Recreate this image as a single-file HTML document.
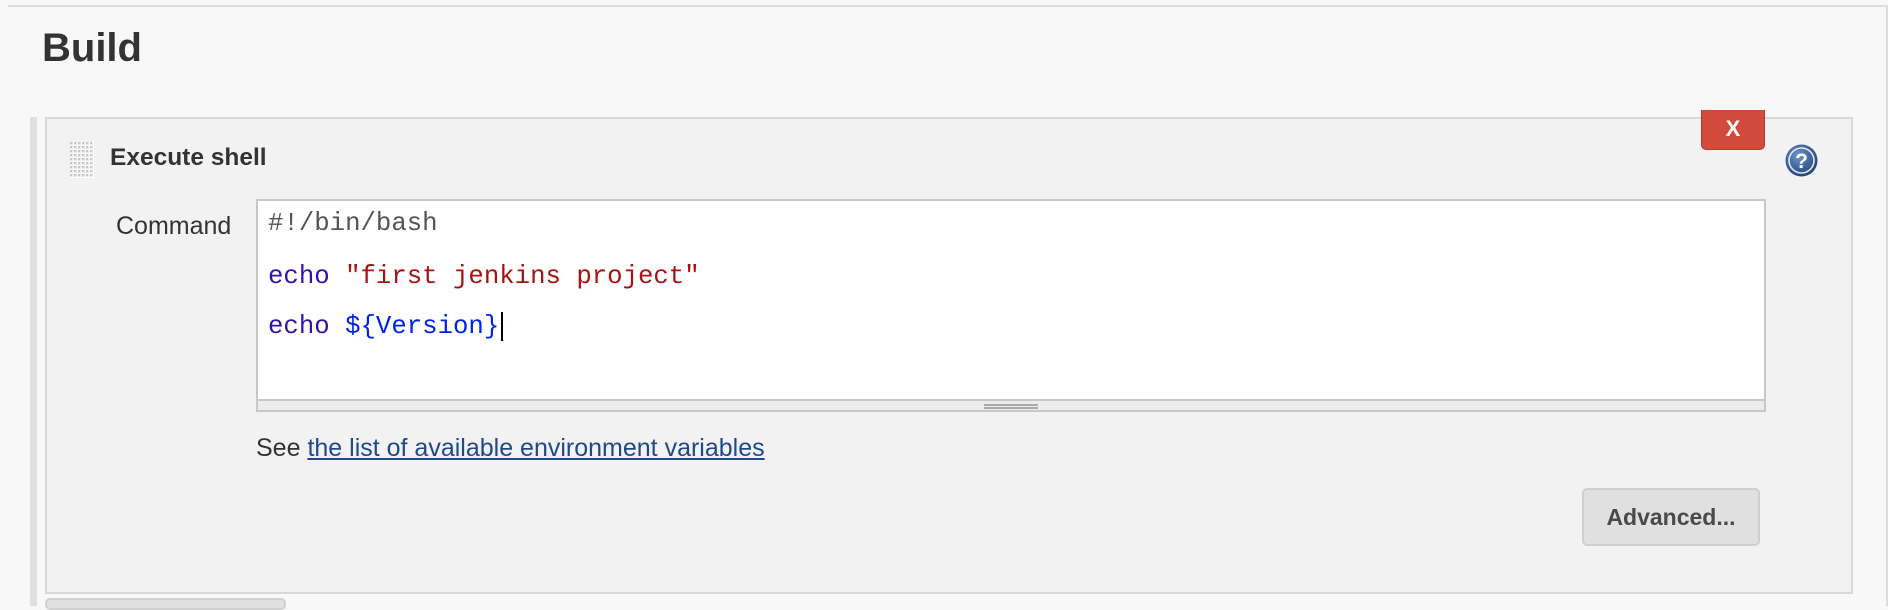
<!DOCTYPE html>
<html><head><meta charset="utf-8"><style>
*{margin:0;padding:0;box-sizing:border-box}
body{width:1888px;height:606px;background:#f8f8f8;position:relative;overflow:hidden;font-family:"Liberation Sans",Arial,sans-serif;color:#333}
.a{position:absolute}
.mono{font-family:"Liberation Mono",monospace;font-size:25.7px;white-space:pre}
</style></head><body>
<div class="a" style="left:8px;top:5px;width:1880px;height:2px;background:#ddd"></div>
<div class="a" style="left:1886px;top:5px;width:2px;height:601px;background:#ddd"></div>
<div class="a" style="left:42px;top:23px;font-size:40px;font-weight:bold;line-height:50px;color:#333">Build</div>
<div class="a" style="left:30px;top:117px;width:7px;height:489px;background:#e0e0e0"></div>
<div class="a" style="left:45px;top:117px;width:1808px;height:477px;background:#f2f2f2;border:2px solid #d8d8d8"></div>
<svg class="a" style="left:70px;top:142px" width="24" height="36">
<defs><pattern id="p" width="4" height="4" patternUnits="userSpaceOnUse"><rect width="2.5" height="2.5" fill="#c8c8c8"/></pattern></defs>
<rect width="24" height="36" fill="#fff"/><rect width="24" height="36" fill="url(#p)"/></svg>
<div class="a" style="left:110px;top:144px;font-size:24.5px;font-weight:bold;line-height:28px">Execute shell</div>
<div class="a" style="left:1701px;top:110px;width:64px;height:40px;background:#d24a3c;border:1px solid #b93a2e;border-top:none;border-radius:0 0 5px 5px;color:#fff;font-weight:bold;font-size:22px;text-align:center;line-height:38px">X</div>
<svg class="a" style="left:1785px;top:144px" width="33" height="33" viewBox="0 0 33 33">
<defs><radialGradient id="g" cx="40%" cy="35%" r="70%"><stop offset="0" stop-color="#6f95c8"/><stop offset="1" stop-color="#1d3f78"/></radialGradient></defs>
<circle cx="16.5" cy="16.5" r="16" fill="url(#g)"/><circle cx="16.5" cy="16.5" r="12.5" fill="none" stroke="#dfe8f4" stroke-width="1.6"/>
<text x="16.5" y="24" text-anchor="middle" font-family="Liberation Sans" font-weight="bold" font-size="21" fill="#fff">?</text></svg>
<div class="a" style="left:116px;top:212px;font-size:25px;line-height:28px;color:#333">Command</div>
<div class="a" style="left:256px;top:199px;width:1510px;height:213px;background:#fff;border:2px solid #c8c8c8"></div>
<div class="a" style="left:258px;top:399px;width:1506px;height:11px;background:#ececec;border-top:2px solid #c8c8c8"></div>
<div class="a" style="left:984px;top:404px;width:54px;height:2px;background:#aaa;box-shadow:0 3px 0 #aaa"></div>
<div class="a mono" style="left:268px;top:209px;color:#555;line-height:30px">#!/bin/bash</div>
<div class="a mono" style="left:268px;top:262px;line-height:30px"><span style="color:#3311aa">echo</span> <span style="color:#aa1111">"first jenkins project"</span></div>
<div class="a mono" style="left:268px;top:312px;line-height:30px"><span style="color:#3311aa">echo</span> <span style="color:#0022ee">${Version}</span><span style="border-left:2px solid #000;margin-left:2px"></span></div>
<div class="a" style="left:256px;top:434px;font-size:25px;line-height:28px;color:#333">See <span style="color:#204a87;text-decoration:underline">the list of available environment variables</span></div>
<div class="a" style="left:1582px;top:488px;width:178px;height:58px;background:#e0e0e0;border:2px solid #cfcfcf;border-radius:5px;font-weight:bold;font-size:23px;color:#4a4a4a;text-align:center;line-height:54px">Advanced...</div>
<div class="a" style="left:45px;top:598px;width:241px;height:12px;background:#e0e0e0;border:2px solid #d0d0d0;border-radius:5px"></div>
</body></html>
